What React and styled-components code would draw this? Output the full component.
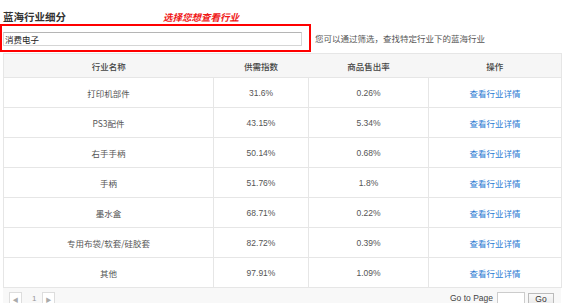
import React from "react";
import styled, { createGlobalStyle } from "styled-components";

const GlobalStyle = createGlobalStyle`
  html, body {
    margin: 0;
    padding: 0;
    background: #fff;
  }
  body {
    font-family: "Noto Sans CJK SC", "Liberation Sans", sans-serif;
    color: #555;
  }
`;

const Page = styled.div`
  width: 580px;
  height: 303px;
  overflow: hidden;
`;

const Heading = styled.div`
  display: flex;
  align-items: flex-end;
  height: 24px;
  padding-left: 3px;
`;

const Title = styled.h3`
  margin: 0 0 1px;
  font-size: 10.5px;
  line-height: 13px;
  font-weight: bold;
  color: #333;
`;

const Annotation = styled.span`
  margin-left: 97px;
  margin-bottom: 1px;
  font-size: 9.5px;
  line-height: 12px;
  font-weight: bold;
  font-style: italic;
  color: #f01818;
`;

const FilterRow = styled.div`
  display: flex;
  align-items: center;
`;

const RedFrame = styled.div`
  width: 311px;
  height: 28px;
  box-sizing: border-box;
  border: 2px solid #f00;
  padding: 6px 7px 4px 1px;
`;

const SearchInput = styled.input`
  display: block;
  width: 299px;
  height: 14px;
  box-sizing: border-box;
  margin: 0;
  padding: 0 1px;
  border: 1px solid #d5d5d5;
  border-top-color: #b5b5b5;
  font-family: "Noto Sans CJK SC", sans-serif;
  font-size: 8.5px;
  color: #222;
  outline: none;
`;

const Hint = styled.span`
  margin-left: 4px;
  font-size: 8.5px;
  color: #555;
`;

const Table = styled.table`
  margin: 1px 0 0 3px;
  width: 558px;
  border-collapse: collapse;
  table-layout: fixed;
  border: 1px solid #e6e6e6;
`;

const HeadCell = styled.th`
  height: 23px;
  padding: 0;
  background: #f6f6f6;
  border-bottom: 1px solid #e6e6e6;
  font-size: 8.5px;
  font-weight: 500;
  color: #444;
  text-align: center;
`;

const Cell = styled.td`
  height: 29px;
  padding: 0;
  border: 1px solid #e6e6e6;
  font-family: ${p => (p.num ? '"Liberation Sans", sans-serif' : '"Noto Sans CJK SC", sans-serif')};
  font-size: 8.5px;
  color: #555;
  text-align: center;
`;

const Link = styled.a`
  color: #2a7bd3;
  text-decoration: none;
  font-size: 8.5px;
`;

const Pager = styled.div`
  display: flex;
  align-items: flex-start;
  margin-left: 3px;
  width: 558px;
  height: 16px;
  padding-top: 4px;
  background: #f8f8f8;
`;

const PageButton = styled.span`
  display: flex;
  align-items: center;
  justify-content: center;
  width: 13px;
  height: 14px;
  box-sizing: border-box;
  border: 1px solid #ddd;
  background: #fff;
  color: #aaa;
  font-size: 6px;
  margin-left: ${p => p.ml || 0}px;
`;

const PageNum = styled.span`
  margin-left: 10px;
  width: 10px;
  font-family: "Liberation Sans", sans-serif;
  font-size: 8px;
  line-height: 14px;
  color: #999;
`;

const Spacer = styled.div`
  flex: 1;
`;

const GoLabel = styled.span`
  font-family: "Liberation Sans", sans-serif;
  font-size: 8.5px;
  line-height: 12px;
  color: #444;
`;

const GoInput = styled.input`
  width: 28px;
  height: 14px;
  box-sizing: border-box;
  margin: 0 0 0 4px;
  padding: 0;
  border: 1px solid #ccc;
  background: #fff;
  outline: none;
`;

const GoButton = styled.button`
  margin: 1px 7px 0 3px;
  width: 26px;
  height: 13px;
  padding: 0;
  border: 1px solid #bbb;
  background: linear-gradient(#fafafa, #e8e8e8);
  font-family: "Liberation Sans", sans-serif;
  font-size: 8.5px;
  line-height: 11px;
  color: #333;
`;

const rows = [
  ["打印机部件", "31.6%", "0.26%"],
  ["PS3配件", "43.15%", "5.34%"],
  ["右手手柄", "50.14%", "0.68%"],
  ["手柄", "51.76%", "1.8%"],
  ["墨水盒", "68.71%", "0.22%"],
  ["专用布袋/软套/硅胶套", "82.72%", "0.39%"],
  ["其他", "97.91%", "1.09%"],
];

export default function App() {
  return (
    <Page>
      <GlobalStyle />
      <Heading>
        <Title>蓝海行业细分</Title>
        <Annotation>选择您想查看行业</Annotation>
      </Heading>
      <FilterRow>
        <RedFrame>
          <SearchInput defaultValue="消费电子" />
        </RedFrame>
        <Hint>您可以通过筛选，查找特定行业下的蓝海行业</Hint>
      </FilterRow>
      <Table>
        <colgroup>
          <col style={{ width: 210 }} />
          <col style={{ width: 95 }} />
          <col style={{ width: 120 }} />
          <col style={{ width: 133 }} />
        </colgroup>
        <thead>
          <tr>
            <HeadCell>行业名称</HeadCell>
            <HeadCell>供需指数</HeadCell>
            <HeadCell>商品售出率</HeadCell>
            <HeadCell>操作</HeadCell>
          </tr>
        </thead>
        <tbody>
          {rows.map(([name, index, rate]) => (
            <tr key={name}>
              <Cell>{name}</Cell>
              <Cell num>{index}</Cell>
              <Cell num>{rate}</Cell>
              <Cell>
                <Link href="#">查看行业详情</Link>
              </Cell>
            </tr>
          ))}
        </tbody>
      </Table>
      <Pager>
        <PageButton ml={6}>◀</PageButton>
        <PageNum>1</PageNum>
        <PageButton>▶</PageButton>
        <Spacer />
        <GoLabel>Go to Page</GoLabel>
        <GoInput />
        <GoButton>Go</GoButton>
      </Pager>
    </Page>
  );
}
